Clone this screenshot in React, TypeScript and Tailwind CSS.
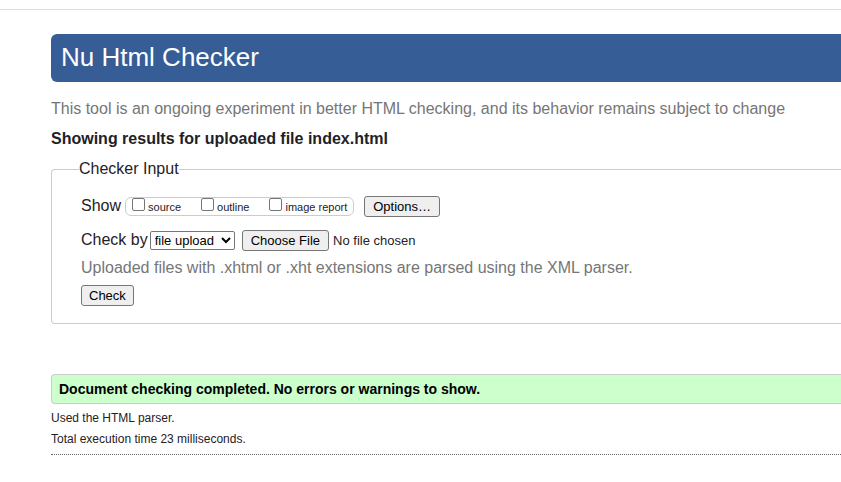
const outputs = [
  { id: "source", label: "source" },
  { id: "outline", label: "outline" },
  { id: "imagereport", label: "image report" },
];

const buttonClass =
  "h-[21px] rounded-[3px] border border-[#767676] bg-[#efefef] text-[13px] leading-none text-black";

function ShowRow() {
  return (
    <div className="flex items-center">
      <span className="pb-[2px] leading-[19px]">Show</span>
      <div className="ml-1 flex h-[19px] items-center gap-5 rounded-md border border-[#ccc] px-[6px]">
        {outputs.map((output) => (
          <label key={output.id} className="flex items-center gap-[3px] text-[11px] leading-[19px]">
            <input
              type="checkbox"
              name={output.id}
              className="mb-[4px] size-[13px] appearance-none rounded-[2px] border border-[#767676] bg-white checked:bg-[#0075ff]"
            />
            <span className="pt-[2px]">{output.label}</span>
          </label>
        ))}
      </div>
      <button type="button" className={`${buttonClass} ml-[10px] px-2`}>
        Options…
      </button>
    </div>
  );
}

function SourceRow() {
  return (
    <div className="mt-[13px] flex h-[21px] items-center">
      <label htmlFor="docselect" className="pb-[2px] leading-[19px]">
        Check by
      </label>
      <select
        id="docselect"
        defaultValue="file"
        className="ml-[2px] h-[19px] w-[85px] rounded-[2px] border border-[#767676] bg-white text-[13px] text-black"
      >
        <option value="address">address</option>
        <option value="file">file upload</option>
        <option value="text">text input</option>
      </select>
      <input
        type="file"
        aria-label="Choose file to check"
        className="ml-[7px] h-[21px] text-[13px] leading-[21px] file:mr-1 file:h-[21px] file:rounded-[3px] file:border file:border-solid file:border-[#767676] file:bg-[#efefef] file:px-2 file:text-[13px] file:leading-none file:text-black"
      />
    </div>
  );
}

export default function App() {
  return (
    <div className="overflow-x-hidden bg-white pt-[9px] font-['Liberation_Sans',Arial,sans-serif] text-base text-[#1f2126]">
      <div className="border-t border-[#ddd]" />
      <main className="pl-[51px] pt-6">
        <header>
          <h1 className="flex h-12 items-center rounded-l-md bg-[#365d95] px-[10px] pb-[2px] text-[26px] text-white">
            Nu Html Checker
          </h1>
          <p className="mt-[15px] leading-6 text-[#767676]">
            This tool is an ongoing experiment in better HTML checking, and its behavior remains subject to change
          </p>
        </header>
        <h2 className="mt-[6px] font-bold leading-6">Showing results for uploaded file index.html</h2>
        <form className="mt-[6px]" onSubmit={(event) => event.preventDefault()}>
          <fieldset className="rounded-l border border-r-0 border-[#ccc] pb-[17px] pl-[29px]">
            <legend className="-ml-[2px] leading-6">Checker Input</legend>
            <div className="pt-[15px]">
              <ShowRow />
              <SourceRow />
              <p className="mt-[5px] leading-6 text-[#767676]">
                Uploaded files with .xhtml or .xht extensions are parsed using the XML parser.
              </p>
              <button type="submit" className={`${buttonClass} mt-[5px] block px-[7px]`}>
                Check
              </button>
            </div>
          </fieldset>
        </form>
        <section className="mt-[50px]">
          <p className="flex h-[30px] items-center rounded-l border border-r-0 border-[#ccc] bg-[#ccffcc] px-[7px] text-sm font-bold text-black">
            Document checking completed. No errors or warnings to show.
          </p>
          <div className="border-b border-dotted border-[#666] py-1 text-xs leading-[21px]">
            <p>Used the HTML parser.</p>
            <p>Total execution time 23 milliseconds.</p>
          </div>
        </section>
      </main>
    </div>
  );
}
